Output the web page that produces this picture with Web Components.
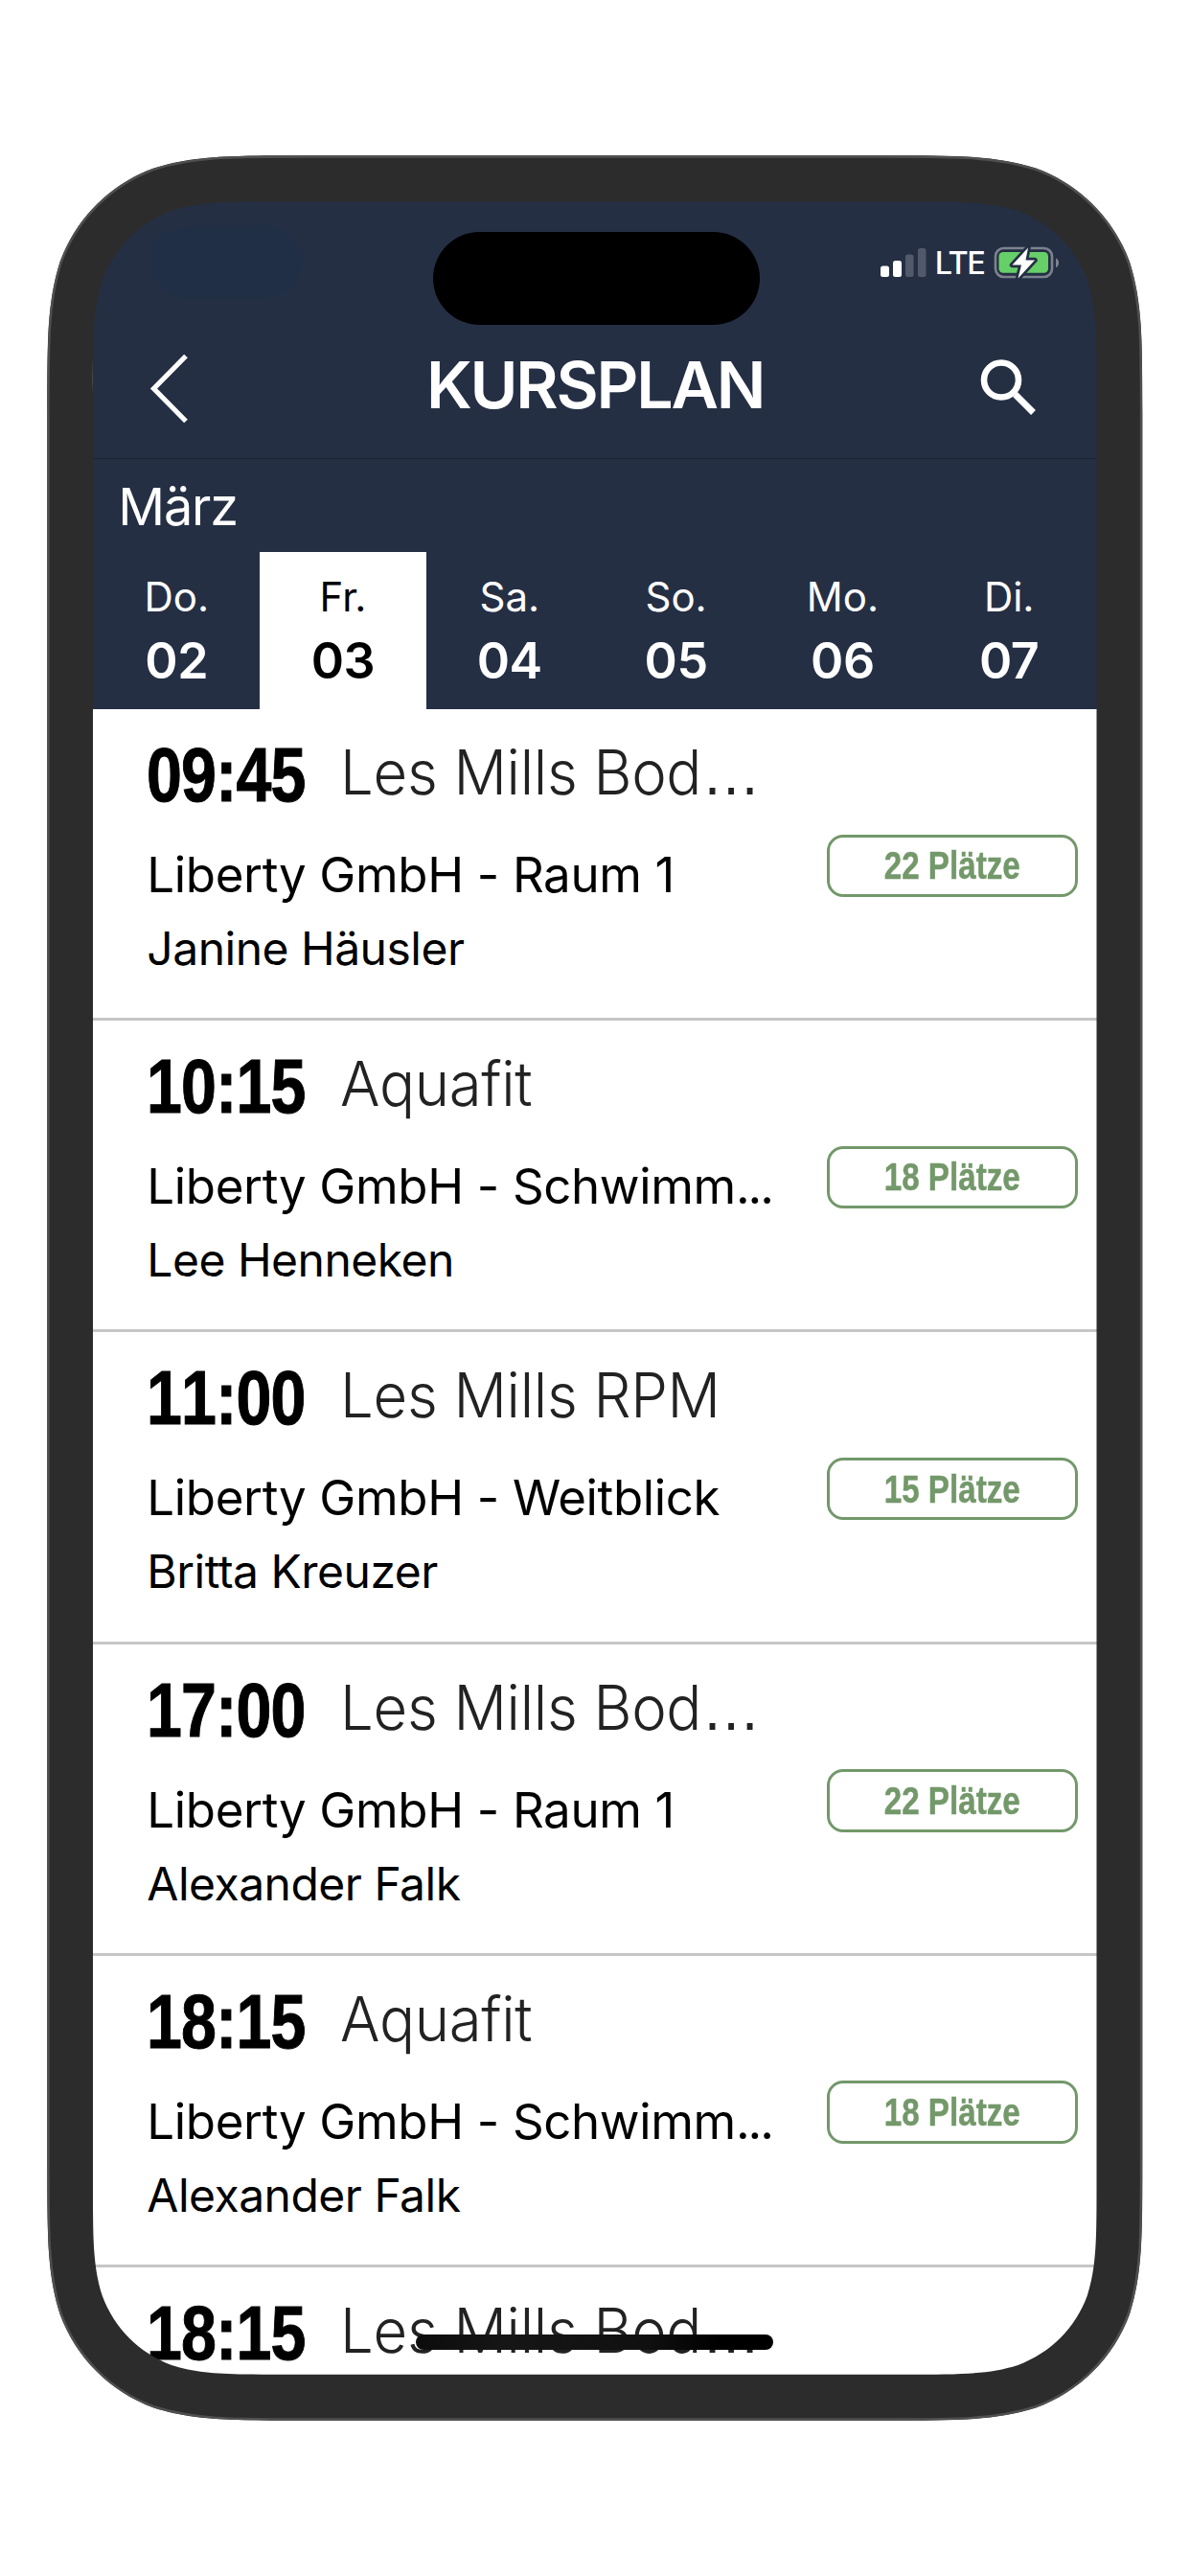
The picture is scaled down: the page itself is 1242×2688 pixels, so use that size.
<!DOCTYPE html>
<html lang="de">
<head>
    <meta charset="UTF-8">
    <meta name="viewport" content="width=device-width, initial-scale=1.0">
    <title>Kursplan</title>
    <style>
        body{
            margin: 0;
            background: #fff;
            font-family: Inter, "Liberation Sans", sans-serif;
        }
        .dots{
            letter-spacing: -2px;
        }
        .more{
            font-family: "Liberation Sans", sans-serif;
        }
    </style>
</head>
<body>
    <phone-frame>
        <app-header>KURSPLAN</app-header>
        <month-bar>März</month-bar>
        <day-tabs>
            <day-tab date="02">Do.</day-tab>
            <day-tab date="03" selected>Fr.</day-tab>
            <day-tab date="04">Sa.</day-tab>
            <day-tab date="05">So.</day-tab>
            <day-tab date="06">Mo.</day-tab>
            <day-tab date="07">Di.</day-tab>
        </day-tabs>
        <course-row time="09:45" places="22">
            <span slot="title">Les Mills Bod<span class="more">…</span></span>
            <span slot="room">Liberty GmbH - Raum 1</span>
            <span slot="coach">Janine Häusler</span>
        </course-row>
        <course-row time="10:15" places="18">
            <span slot="title">Aquafit</span>
            <span slot="room">Liberty GmbH - Schwimm<span class="dots">...</span></span>
            <span slot="coach">Lee Henneken</span>
        </course-row>
        <course-row time="11:00" places="15">
            <span slot="title">Les Mills RPM</span>
            <span slot="room">Liberty GmbH - Weitblick</span>
            <span slot="coach">Britta Kreuzer</span>
        </course-row>
        <course-row time="17:00" places="22">
            <span slot="title">Les Mills Bod<span class="more">…</span></span>
            <span slot="room">Liberty GmbH - Raum 1</span>
            <span slot="coach">Alexander Falk</span>
        </course-row>
        <course-row time="18:15" places="18">
            <span slot="title">Aquafit</span>
            <span slot="room">Liberty GmbH - Schwimm<span class="dots">...</span></span>
            <span slot="coach">Alexander Falk</span>
        </course-row>
        <course-row time="18:15">
            <span slot="title">Les Mills Bod<span class="more">…</span></span>
        </course-row>
    </phone-frame>

    <script>
        // Attaches an open shadow root holding the class's template
        class BaseElement extends HTMLElement{
            constructor(){
                super()
                this.attachShadow({mode:'open'});
                const template = document.createElement('template')
                template.innerHTML = this.constructor.html
                this.shadowRoot.append(template.content.cloneNode(true))
            }
        }

        // Rounded rectangle with continuous corners
        function smoothRect(x, y, w, h, r){
            const k = [1.52866, 1.08849, 0.86841, 0.63149, 0.37282, 0.16906, 0.07491].map(n => n * r)
            const [a, b, c, d, e, f, g] = k
            const R = x + w, B = y + h
            return `M${x + a} ${y}H${R - a}
                C${R - b} ${y} ${R - c} ${y} ${R - d} ${y + g}
                C${R - e} ${y + f} ${R - f} ${y + e} ${R - g} ${y + d}
                C${R} ${y + c} ${R} ${y + b} ${R} ${y + a}V${B - a}
                C${R} ${B - b} ${R} ${B - c} ${R - g} ${B - d}
                C${R - f} ${B - e} ${R - e} ${B - f} ${R - d} ${B - g}
                C${R - c} ${B} ${R - b} ${B} ${R - a} ${B}H${x + a}
                C${x + b} ${B} ${x + c} ${B} ${x + d} ${B - g}
                C${x + e} ${B - f} ${x + f} ${B - e} ${x + g} ${B - d}
                C${x} ${B - c} ${x} ${B - b} ${x} ${B - a}V${y + a}
                C${x} ${y + b} ${x} ${y + c} ${x + g} ${y + d}
                C${x + f} ${y + e} ${x + e} ${y + f} ${x + d} ${y + g}
                C${x + c} ${y} ${x + b} ${y} ${x + a} ${y}Z`
        }

        class PhoneFrame extends BaseElement{
            static html = `
<style>
:host {
    display: block;
    position: relative;
    box-sizing: border-box;
    width: 1143.5px;
    height: 2364px;
    margin: 162px 0 0 49.3px;
    padding: 48px;
}
.screen {
    height: 100%;
    overflow: hidden;
    border-radius: 60px;
    background: #fff;
}
.bezel {
    position: absolute;
    inset: 0;
}
.island {
    position: absolute;
    top: 80.3px;
    left: 402.5px;
    width: 341.3px;
    height: 97px;
    border-radius: 49px;
    background: #000;
}
.home {
    position: absolute;
    bottom: 74px;
    left: 384.7px;
    width: 373px;
    height: 16px;
    border-radius: 8px;
    background: linear-gradient(90deg, #0c0c0c, #161616 25%, #101010 65%, #000 85%);
}
</style>
<div class="screen"><slot></slot></div>
<svg class="bezel" width="1143.5" height="2364">
    <path class="ring" fill="#2c2c2c" fill-rule="evenodd"/>
    <path class="edge" fill="none" stroke="#505050" stroke-width="2.4"/>
</svg>
<div class="island"></div>
<div class="home"></div>`

            constructor(){
                super()
                this.shadowRoot.querySelector('.ring').setAttribute('d',
                    smoothRect(0.3, 0.3, 1143, 2363.4, 176) + smoothRect(48, 48.3, 1047.5, 2267.4, 130))
                this.shadowRoot.querySelector('.edge').setAttribute('d',
                    smoothRect(1.5, 1.5, 1140.5, 2361, 175))
            }
        }

        class AppHeader extends BaseElement{
            static html = `
<style>
:host {
    display: flex;
    flex-direction: column;
    box-sizing: border-box;
    height: 269px;
    background: #252f44;
    color: #fff;
    border-bottom: 1px solid #1b2531;
}
.status {
    display: flex;
    align-items: center;
    height: 128px;
    box-sizing: border-box;
    padding: 0 37.5px 0 59px;
}
/* dim patch where the clock sits */
.clock {
    width: 160px;
    height: 76px;
    margin: -1px auto 0 0;
    border-radius: 38px;
    background: #212f46;
    filter: blur(2px);
}
.network {
    margin: 0 10px 0 8px;
    font: 500 32.5px/40px Inter, sans-serif;
    letter-spacing: -1.5px;
    padding-top: 2px;
}
.bar {
    display: grid;
    grid-template-columns: 110px 1fr 110px;
    align-items: center;
    height: 126px;
}
h1 {
    margin: 0;
    text-align: center;
    font-size: 68px;
    line-height: 80px;
    font-weight: 600;
    letter-spacing: -2.2px;
}
svg {
    display: block;
    overflow: visible;
}
</style>
<div class="status">
    <div class="clock"></div>
    <svg width="50" height="32">
        <rect x="1" y="19.5" width="9" height="11.5" rx="2.5" fill="#fff"/>
        <rect x="14" y="14" width="9" height="17" rx="2.5" fill="#fff"/>
        <rect x="27" y="7.5" width="8.5" height="23.5" rx="2.5" fill="#515a6b"/>
        <rect x="40" y="1" width="8.5" height="30" rx="2.5" fill="#515a6b"/>
    </svg>
    <span class="network">LTE</span>
    <svg width="70" height="36" viewBox="0 0 70 36">
        <rect x="2" y="3" width="59" height="30" rx="8.5" fill="none" stroke="#7d828e" stroke-width="2.6"/>
        <path d="M65 13.2C69 15 69 21.500 65 23.300Z" fill="#7d828e"/>
        <rect x="5.500" y="7" width="51.500" height="21.800" rx="4.500" fill="#66cf67"/>
        <path d="M36 2.500 19.500 20.500H29L25.500 34.500 43 15.500H33.500Z" fill="#fff" stroke="#252f44" stroke-width="5.500" stroke-linejoin="round" paint-order="stroke"/>
    </svg>
</div>
<div class="bar">
    <svg width="110" height="90"><path d="M97 15.500 63.500 49.500 97 83.500" fill="none" stroke="#fff" stroke-width="5.200"/></svg>
    <h1><slot></slot></h1>
    <svg width="110" height="90">
        <circle cx="10" cy="40.500" r="18" fill="none" stroke="#fff" stroke-width="6.600"/>
        <path d="M24.500 55.500 43.500 74.500" stroke="#fff" stroke-width="6.800"/>
    </svg>
</div>`
        }

        class MonthBar extends BaseElement{
            static html = `
<style>
:host {
    display: block;
    box-sizing: border-box;
    height: 97px;
    padding: 16px 26px 0;
    background: #252f44;
    color: #fff;
    font-size: 54px;
    line-height: 68px;
    letter-spacing: -1.2px;
}
</style>
<slot></slot>`
        }

        class DayTabs extends BaseElement{
            static html = `
<style>
:host {
    display: flex;
    height: 164px;
    background: #252f44;
    color: #fff;
}
</style>
<slot></slot>`
        }

        class DayTab extends BaseElement{
            static html = `
<style>
:host {
    display: flex;
    flex-direction: column;
    align-items: center;
    box-sizing: border-box;
    width: 173.8px;
    padding-top: 22px;
    font-size: 42px;
    line-height: 50px;
}
:host([selected]) {
    background: #fff;
    color: #000;
}
b {
    margin-top: 12px;
    font-size: 52px;
    line-height: 60px;
    font-weight: 600;
    letter-spacing: -0.5px;
}
</style>
<span><slot></slot></span>
<b></b>`

            connectedCallback(){
                this.shadowRoot.querySelector('b').textContent = this.getAttribute('date')
            }
        }

        class PlacesBadge extends BaseElement{
            static html = `
<style>
:host {
    display: flex;
    align-items: center;
    justify-content: center;
    box-sizing: border-box;
    width: 262px;
    height: 65.5px;
    border: 3px solid #73986a;
    border-radius: 17px;
    color: #73986a;
    font: bold 41px/60px "Liberation Sans", sans-serif;
    white-space: nowrap;
}
span {
    transform: scaleX(0.81);
    -webkit-text-stroke: 0.5px #73986a;
}
</style>
<span><slot></slot></span>`
        }

        class CourseRow extends BaseElement{
            static html = `
<style>
:host {
    display: flex;
    box-sizing: border-box;
    height: 325.2px;
    padding: 29px 20px 0 56px;
    border-bottom: 3px solid #c6c6c6;
    color: #000;
    white-space: nowrap;
}
.info {
    flex: 1;
    min-width: 0;
}
.head {
    display: flex;
    height: 80px;
}
.time {
    width: 202px;
    font: bold 79px/80px "Liberation Sans", sans-serif;
    font-kerning: none;
    letter-spacing: -1px;
    -webkit-text-stroke: 1px #000;
    transform: scaleX(0.84);
    transform-origin: 0 0;
}
.title {
    font-size: 64.5px;
    line-height: 75px;
    font-weight: 300;
    letter-spacing: -0.3px;
    color: #222;
    transform: scaleX(0.955);
    transform-origin: 0 0;
}
.room {
    margin-top: 34px;
    font-size: 51px;
    line-height: 60px;
    letter-spacing: -0.35px;
}
.coach {
    margin-top: 17px;
    font-size: 48px;
    line-height: 60px;
    letter-spacing: -0.5px;
}
places-badge { margin-top: 101.5px; }
</style>
<div class="info">
    <div class="head">
        <div class="time"></div>
        <div class="title"><slot name="title"></slot></div>
    </div>
    <div class="room"><slot name="room"></slot></div>
    <div class="coach"><slot name="coach"></slot></div>
</div>
<places-badge></places-badge>`

            connectedCallback(){
                this.shadowRoot.querySelector('.time').textContent = this.getAttribute('time')
                const badge = this.shadowRoot.querySelector('places-badge')
                if (this.hasAttribute('places')) {
                    badge.textContent = this.getAttribute('places') + ' Plätze'
                } else {
                    badge.remove()
                }
            }
        }

        customElements.define("places-badge", PlacesBadge);
        customElements.define("course-row", CourseRow);
        customElements.define("day-tab", DayTab);
        customElements.define("day-tabs", DayTabs);
        customElements.define("month-bar", MonthBar);
        customElements.define("app-header", AppHeader);
        customElements.define("phone-frame", PhoneFrame);
    </script>
</body>
</html>
